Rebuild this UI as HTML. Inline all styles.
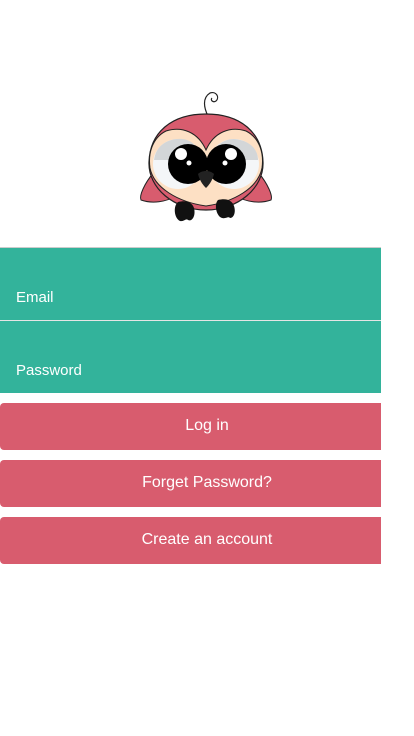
<!DOCTYPE html>
<html><head><meta charset="utf-8"><style>
html,body{margin:0;padding:0;background:#fff;width:414px;height:736px;overflow:hidden;font-family:"Liberation Sans",Arial,sans-serif}
.field{position:absolute;left:0;width:381px;background:#33b39b;color:#fff;font-size:15px}
.field span{position:absolute;left:16px;bottom:14px}
.btn{position:absolute;left:0;width:381px;height:47px;background:#d85c6e;color:#fff;font-size:16px;text-align:center;line-height:46px;border-radius:4px 0 0 4px;text-indent:33px}
</style></head><body>
<svg style="position:absolute;left:138px;top:88px" width="136" height="136" viewBox="0 0 136 136">
 <path d="M70 28 C66 20 64 10 72 5 C78 3 82 9 78 13 C75 15 72 12 74 10" fill="none" stroke="#222" stroke-width="1.2"/>
 <path d="M16 84 C6 96 1 108 3 112 C14 116 28 114 38 108 Z" fill="#d85c6e" stroke="#222" stroke-width="1"/>
 <path d="M120 84 C130 96 135 108 133 112 C122 116 108 114 98 108 Z" fill="#d85c6e" stroke="#222" stroke-width="1"/>
 <path d="M68 26 C34 26 12 44 11 74 C10 100 36 122 68 122 C100 122 126 100 125 74 C124 44 102 26 68 26 Z" fill="#d85c6e" stroke="#222" stroke-width="1.2"/>
 <path d="M68 62 C60 44 44 38 28 43 C14 50 10 66 12 80 C16 100 40 114 68 118 C96 114 120 100 124 80 C126 66 122 50 108 43 C92 38 76 44 68 62 Z" fill="#fde0c4" stroke="#222" stroke-width="1"/>
 <circle cx="40" cy="76" r="25" fill="#f4f6f8"/>
 <path d="M16 72 C18 56 32 50 44 51 C56 52 62 62 64 72 Z" fill="#d3d6d8"/>
 <circle cx="96" cy="76" r="25" fill="#f4f6f8"/>
 <path d="M72 72 C74 60 84 51 96 51 C110 52 120 60 120 72 Z" fill="#d3d6d8"/>
 <circle cx="50" cy="76" r="20" fill="#000"/>
 <circle cx="88" cy="76" r="20" fill="#000"/>
 <circle cx="43" cy="66" r="6" fill="#fff"/><circle cx="51" cy="75" r="2.5" fill="#fff"/>
 <circle cx="93" cy="66" r="6" fill="#fff"/><circle cx="87" cy="75" r="2.5" fill="#fff"/>
 <path d="M60 86 C64 82 72 82 76 86 C74 94 70 98 68 100 C66 98 62 94 60 86 Z" fill="#222"/>
 <path d="M40 114 C35 118 36 130 42 133 C46 134 48 130 50 132 C54 134 58 128 56 120 C54 114 48 112 40 114 Z" fill="#111"/>
 <path d="M80 112 C76 116 78 128 84 130 C88 131 90 128 92 130 C96 130 98 124 96 118 C94 112 88 110 80 112 Z" fill="#111"/>
</svg>
<div style="position:absolute;left:0;top:247px;width:381px;height:1px;background:#ccc"></div>
<div class="field" style="top:248px;height:72px"><span>Email</span></div>
<div style="position:absolute;left:0;top:320px;width:381px;height:1px;background:#e5e5e5"></div>
<div class="field" style="top:321px;height:72px"><span>Password</span></div>
<div class="btn" style="top:403px">Log in</div>
<div class="btn" style="top:460px">Forget Password?</div>
<div class="btn" style="top:517px">Create an account</div>
</body></html>
